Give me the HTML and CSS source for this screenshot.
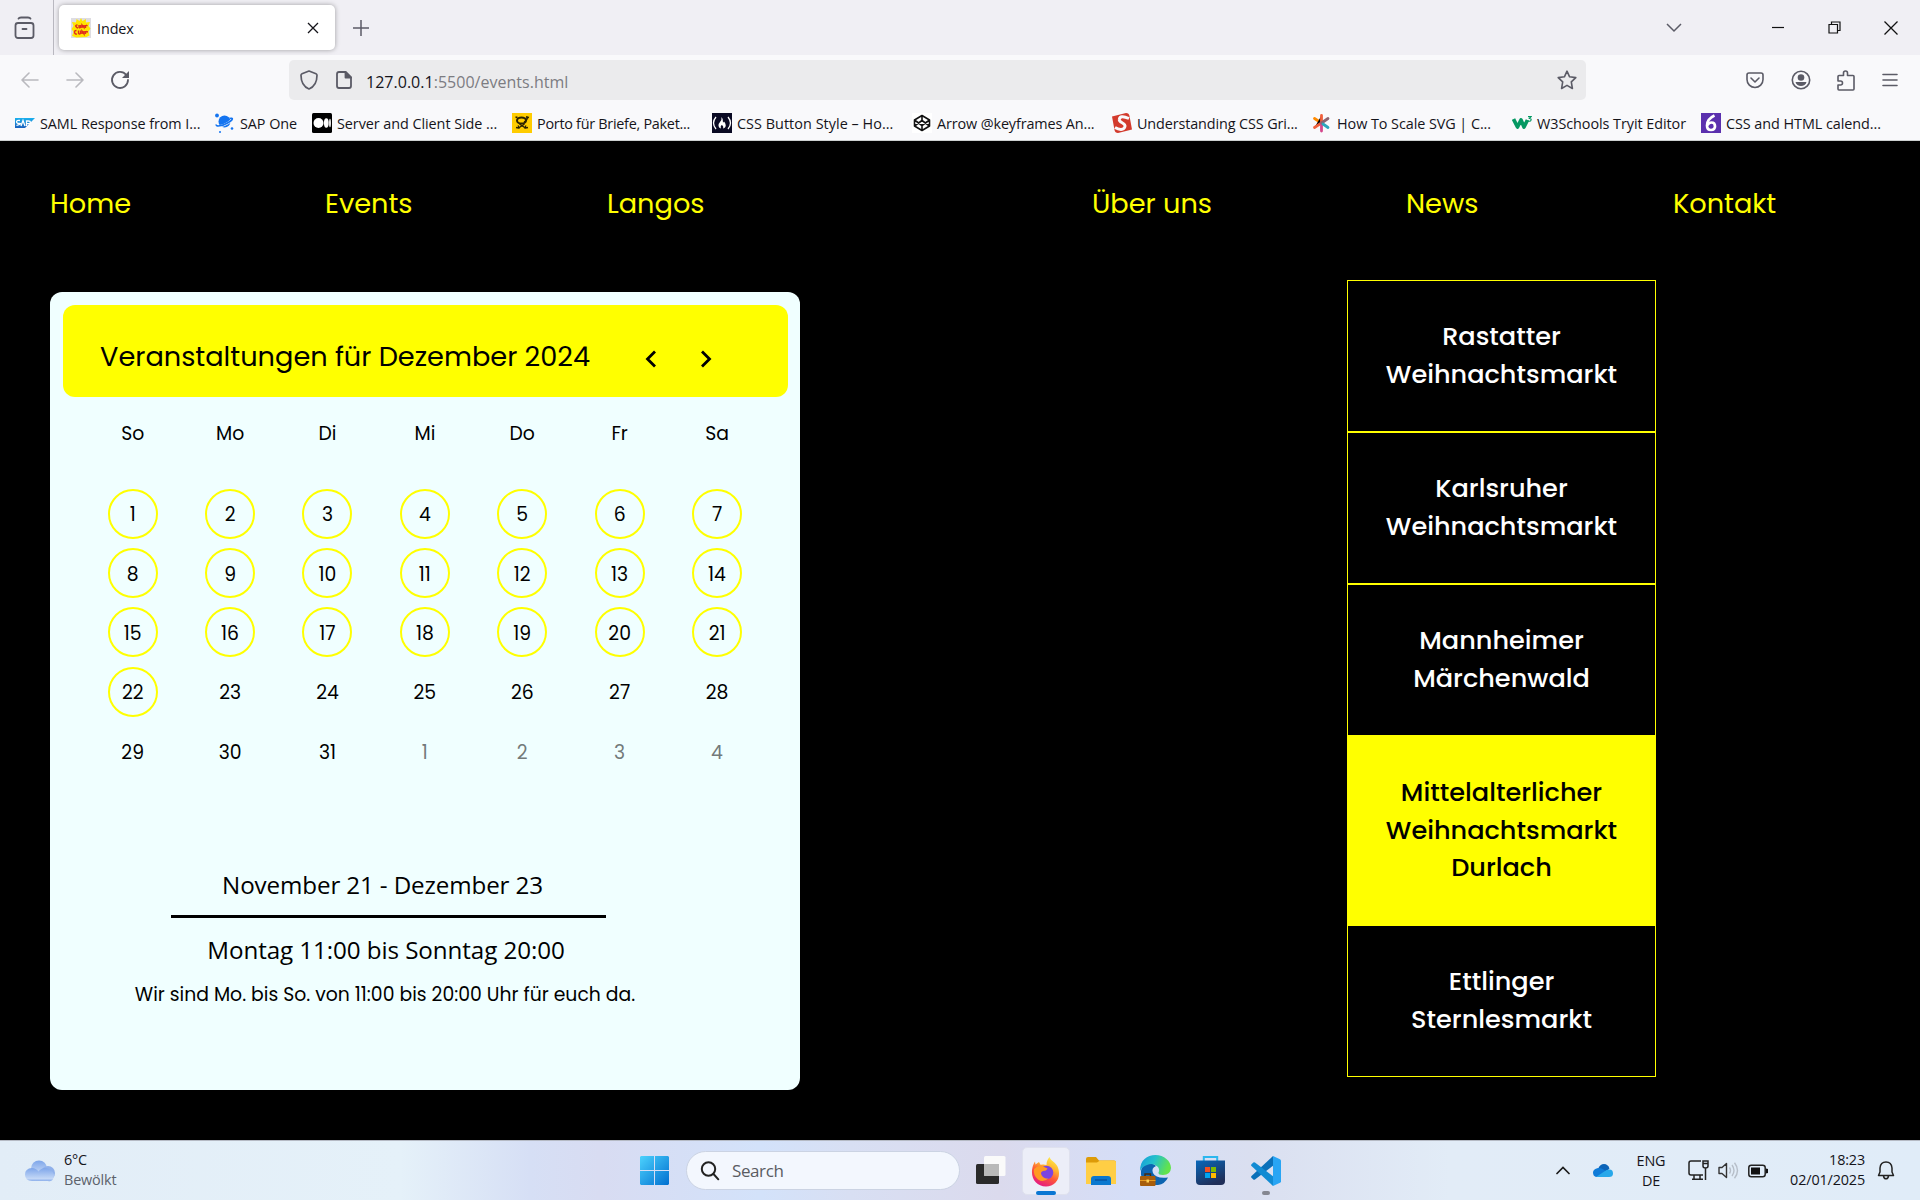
FILE: index.html
```
<!DOCTYPE html>
<html lang="de">
<head>
<meta charset="utf-8">
<title>Index</title>
<link rel="stylesheet" href="styles.css">
</head>
<body>
<header class="browser">
  <div class="tabstrip">
    <div class="recent"><svg width="22" height="26" viewBox="0 0 22 26" fill="none" stroke="#5b5b66" stroke-width="1.8" stroke-linecap="round"><rect x="1.500" y="8" width="18" height="15" rx="2.500"/><path d="M4.500 3.600Q5 2.500 7 2.500h7q2 0 2.500 1.100M8.500 14h4"/></svg></div>
    <div class="tab">
      <svg class="fav" width="20" height="20" viewBox="0 0 20 20"><path fill="#dedde2" d="M0 0h20v20H0z"/><path fill="#ffe600" d="m10 0 1.500 3L15 1l-.2 3.500L19 4l-1.500 4 2 2.500-2 3 1 4-3 1.500-10 .5L1 18l1.500-4L.5 11l2-3L1 4l4 .5L5.500 1 8.500 3z"/><path stroke="#e02d1b" stroke-width="1.400" fill="none" d="M6.500 7Q4 7 5 8.500T7 10M8 7v2.500q1 .8 1.500 0V7M11 10V7l2 2.500V7M14.500 7v3M15 7l1.500 1M5.500 12.500q-2.500 0-2 2t2.500 1.500M7.500 12.500v3q1 1 2 0v-3M11 16v-3l2 3v-3M14.500 13v3M15 13.500l2 .5"/></svg>
      <span class="tab-title">Index</span>
      <svg width="12" height="12" viewBox="0 0 12 12" stroke="#15141a" stroke-width="1.300"><path d="m1 1 10 10M11 1 1 11"/></svg>
    </div>
    <svg class="plus" width="16" height="16" viewBox="0 0 16 16" stroke="#5b5b66" stroke-width="1.500"><path d="M8 0v16M0 8h16"/></svg>
    <div class="window">
      <svg width="16" height="10" viewBox="0 0 16 10" fill="none" stroke="#5b5b66" stroke-width="1.500"><path d="m1 1 7 7 7-7"/></svg>
      <svg class="min" width="12" height="12" viewBox="0 0 12 12" stroke="#111" stroke-width="1.200"><path d="M0 5.500h12"/></svg>
      <svg class="restore" width="13" height="13" viewBox="0 0 13 13" fill="none" stroke="#111" stroke-width="1.200"><path d="M1 3.500h8.500V12H1zM3.500 3.500V1H12v8.500H9.500"/></svg>
      <svg class="shut" width="14" height="14" viewBox="0 0 14 14" stroke="#111" stroke-width="1.300"><path d="m.5.5 13 13M13.500.5l-13 13"/></svg>
    </div>
  </div>
  <div class="toolbar">
    <svg class="back" width="18" height="16" viewBox="0 0 18 16" fill="none" stroke="#b9b9be" stroke-width="1.600" stroke-linecap="round" stroke-linejoin="round"><path d="M17 8H1m7-7L1 8l7 7"/></svg>
    <svg class="fwd" width="18" height="16" viewBox="0 0 18 16" fill="none" stroke="#b9b9be" stroke-width="1.600" stroke-linecap="round" stroke-linejoin="round"><path d="M1 8h16m-7-7 7 7-7 7"/></svg>
    <svg class="reload" width="20" height="20" viewBox="0 0 20 20" fill="none" stroke="#5b5b66" stroke-width="1.800" stroke-linecap="round"><path d="M16.300 5A8 8 0 1 0 18 10"/><path fill="#5b5b66" stroke="none" d="M19 1v7h-7z"/></svg>
    <div class="urlbar">
      <svg width="18" height="20" viewBox="0 0 18 20" fill="none" stroke="#5b5b66" stroke-width="1.700" stroke-linejoin="round"><path d="m9 1 7 2.800q1 .4 1 1.500C17 12 14 17 9 19 4 17 1 12 1 5.300q0-1.100 1-1.500z"/></svg>
      <svg class="doc" width="16" height="18" viewBox="0 0 16 18" fill="none" stroke="#5b5b66" stroke-width="1.800" stroke-linejoin="round"><path d="M3 1h6.500L15 6.500V15q0 2-2 2H3q-2 0-2-2V3q0-2 2-2z"/><path fill="#5b5b66" d="M9.500 1v5.500H15z"/></svg>
      <span class="url">127.0.0.1<span class="path">:5500/events.html</span></span>
      <svg class="star" width="20" height="20" viewBox="0 0 20 20" fill="none" stroke="#5b5b66" stroke-width="1.600" stroke-linejoin="round"><path d="m10 1.200 2.600 5.600 6.200.8-4.500 4.300 1.100 6.600-5.400-3.100-5.400 3.100 1.100-6.600L1.200 7.600l6.200-.8z"/></svg>
    </div>
    <svg class="pocket" width="18" height="18" viewBox="0 0 18 18" fill="none" stroke="#5b5b66" stroke-width="1.600" stroke-linecap="round" stroke-linejoin="round"><path d="M3 2h12q2 0 2 2v4.500a8 8 0 0 1-16 0V4q0-2 2-2z"/><path d="m5 7 4 4 4-4"/></svg>
    <svg class="account" width="20" height="20" viewBox="0 0 20 20"><circle cx="10" cy="10" r="8.700" fill="none" stroke="#5b5b66" stroke-width="1.600"/><circle cx="10" cy="7.500" r="3.300" fill="#5b5b66"/><path fill="#5b5b66" d="M4.500 12h11c-.5 2.500-3 4-5.500 4s-5-1.500-5.500-4z"/></svg>
    <svg class="puzzle" width="18" height="21" viewBox="0 0 18 21" fill="none" stroke="#5b5b66" stroke-width="1.600" stroke-linejoin="round"><path d="M1 8V6.500Q1 5.500 2 5.500h4.500V3q0-2 2-2t2 2v2.500H16q1 0 1 1V19q0 1-1 1H2q-1 0-1-1v-4h2.500q2 0 2-2t-2-2H1z"/></svg>
    <svg width="16" height="14" viewBox="0 0 16 14" stroke="#5b5b66" stroke-width="1.600" stroke-linecap="round"><path d="M1 1.500h14M1 7h14M1 12.500h14"/></svg>
  </div>
  <div class="bookmarks">
    <a class="bm"><svg width="20" height="20" viewBox="0 0 20 20"><defs><linearGradient id="sap" x2="0" y2="1"><stop stop-color="#1bb1ee"/><stop offset="1" stop-color="#1b5fbd"/></linearGradient></defs><path fill="url(#sap)" d="M0 5h20L10 15H0z"/><path d="M5 7.500Q1.500 7 1.500 8.800T4.500 10.500 1.500 12.500M6 13l2-5.500L10 13M11.500 13V8h2q2 0 2 1.300t-2 1.400h-2" fill="none" stroke="#fff" stroke-width="1.300"/></svg><span>SAML Response from I...</span></a>
    <a class="bm short"><svg width="20" height="20" viewBox="0 0 20 20" fill="#1474f0"><circle cx="2" cy="2.500" r="1.900"/><circle cx="17" cy="15.500" r="1.300"/><circle cx="5" cy="19" r="1"/><circle cx="9.500" cy="8.500" r="6"/><path d="M15 5c4-1 3 2-2 5S1 15 1 12" fill="none" stroke="#f9f9fb" stroke-width="2.600"/><path d="M14.500 5.500c4-1 4 1-1.500 4.300S0 14 1.500 11.500" fill="none" stroke="#1474f0" stroke-width="1.600"/></svg><span>SAP One</span></a>
    <a class="bm"><svg width="20" height="20" viewBox="0 0 20 20"><rect width="20" height="20" rx="1.500"/><circle cx="6.500" cy="10" r="5" fill="#fff"/><ellipse cx="14.300" cy="10" rx="2.400" ry="4.800" fill="#fff"/><ellipse cx="18" cy="10" rx=".9" ry="4.300" fill="#fff"/></svg><span>Server and Client Side ...</span></a>
    <a class="bm"><svg width="20" height="20" viewBox="0 0 20 20"><path fill="#fc0" d="M0 0h20v20H0z"/><g fill="none" stroke="#2b2200"><ellipse cx="9.500" cy="7.500" rx="4.500" ry="3" stroke-width="2"/><path stroke-width="1.700" d="M5.500 4.500 3.500 4M12 9q3-1 3.500-5.500M14 3.800l3 .7"/><path stroke-width="1.300" d="m4 14.500 2.500.5 6-4M16 14.500l-2.500.5-6-4M6 12.500l1.500 3M14 12.500l-1.500 3"/></g></svg><span>Porto für Briefe, Paket...</span></a>
    <a class="bm"><svg width="20" height="20" viewBox="0 0 20 20"><path fill="#0a0a23" d="M0 0h20v20H0z"/><path d="M4 4q-5 6 0 12M16 4q5 6 0 12" fill="none" stroke="#fff" stroke-width="1.300"/><path fill="#fff" d="M9.500 4q.5 3-1.500 5t-1.500 4T9 15.500q-1-2 .5-3.500 2.500 1 1.500 3.500 3-1 2.700-3.500T12 8.500q-.5 1-1 1Q11.500 6 9.500 4z"/></svg><span>CSS Button Style – Ho...</span></a>
    <a class="bm"><svg width="20" height="20" viewBox="0 0 20 20"><path fill="#fff" d="M0 0h20v20H0z"/><path d="m10 2.500 7.500 4.500v6L10 17.500 2.500 13V7zM10 2.500v5M10 12.500v5M2.500 7l7.500 5.500L17.500 7M2.500 13 10 7.500l7.500 5.500" fill="none" stroke="#111" stroke-width="1.600" stroke-linejoin="round"/></svg><span>Arrow @keyframes An...</span></a>
    <a class="bm"><svg width="20" height="20" viewBox="0 0 20 20"><path fill="#d33a2c" d="M0 3.500 14 0q3 0 3.500 3l2.500 13.500L6 20q-3 0-3.500-3z"/><path d="M17 5.500Q8 1.500 7.300 6.300C6.500 10 14 9.500 13 13.500 12 17.500 7 17 3 14.500" fill="none" stroke="#f9f9fb" stroke-width="2.900"/></svg><span>Understanding CSS Gri...</span></a>
    <a class="bm"><svg width="20" height="20" viewBox="0 0 20 20" stroke-width="2.800" stroke-linecap="round"><path stroke="#ff8a00" d="m2.500 5.500 7 4.500"/><path stroke="#f0603c" d="m2.500 14.500 7-4.500V2.500"/><path stroke="#d5478c" d="M9.500 10v8"/><path stroke="#8c6470" d="m9.500 10 6.500-4.500"/><path stroke="#2ba6bd" d="m11 11 5 3.500"/></svg><span>How To Scale SVG | C...</span></a>
    <a class="bm mid"><svg width="20" height="20" viewBox="0 0 20 20" fill="none" stroke="#059862"><path stroke-width="3.700" stroke-linejoin="round" d="m1.500 6 4 8 3.500-7 3 7 3.500-7"/><path stroke-width="1.200" d="M16 3.700h3l-1.500 1.700q2 .1 1.500 1.800t-3 .7"/></svg><span>W3Schools Tryit Editor</span></a>
    <a class="bm"><svg width="20" height="20" viewBox="0 0 20 20"><path fill="#5b30ae" d="M0 0h20v20H0z"/><path d="M13.500 2.500Q6 6 6 12.500 6 17 10 17t4-3.700Q14 9.500 10.500 9.500 8 9.500 6.500 12" fill="none" stroke="#fff" stroke-width="2.700"/></svg><span>CSS and HTML calend...</span></a>
  </div>
</header>

<main class="page">
  <nav class="menu"><a>Home</a><a>Events</a><a>Langos</a><a>Über uns</a><a>News</a><a>Kontakt</a></nav>
  <div class="content">
    <section class="calendar">
      <div class="cal-head">
        <h1>Veranstaltungen für Dezember 2024</h1>
        <svg width="12" height="18" viewBox="0 0 12 18" fill="none" stroke="#000" stroke-width="2.800"><path d="m10 1.500-7.500 7.500 7.500 7.500"/></svg>
        <svg class="next" width="12" height="18" viewBox="0 0 12 18" fill="none" stroke="#000" stroke-width="2.800"><path d="m2 1.500 7.500 7.500-7.500 7.500"/></svg>
      </div>
      <div class="weekdays"><span>So</span><span>Mo</span><span>Di</span><span>Mi</span><span>Do</span><span>Fr</span><span>Sa</span></div>
      <div class="days">
        <span class="on">1</span><span class="on">2</span><span class="on">3</span><span class="on">4</span><span class="on">5</span><span class="on">6</span><span class="on">7</span>
        <span class="on">8</span><span class="on">9</span><span class="on">10</span><span class="on">11</span><span class="on">12</span><span class="on">13</span><span class="on">14</span>
        <span class="on">15</span><span class="on">16</span><span class="on">17</span><span class="on">18</span><span class="on">19</span><span class="on">20</span><span class="on">21</span>
        <span class="on">22</span><span>23</span><span>24</span><span>25</span><span>26</span><span>27</span><span>28</span>
        <span>29</span><span>30</span><span>31</span><span class="off">1</span><span class="off">2</span><span class="off">3</span><span class="off">4</span>
      </div>
      <div class="info">
        <p class="dates">November 21 - Dezember 23</p>
        <hr>
        <p class="hours">Montag 11:00 bis Sonntag 20:00</p>
        <p class="note">Wir sind Mo. bis So. von 11:00 bis 20:00 Uhr für euch da.</p>
      </div>
    </section>
    <section class="events">
      <button>Rastatter<br>Weihnachtsmarkt</button>
      <button>Karlsruher<br>Weihnachtsmarkt</button>
      <button>Mannheimer<br>Märchenwald</button>
      <button class="active">Mittelalterlicher<br>Weihnachtsmarkt<br>Durlach</button>
      <button>Ettlinger<br>Sternlesmarkt</button>
    </section>
  </div>
</main>

<footer class="taskbar">
  <div class="weather">
    <svg width="30" height="22" viewBox="0 0 30 22"><defs><linearGradient id="cl" x2="0" y2="1"><stop stop-color="#7ea6ea"/><stop offset=".8" stop-color="#c3d7f6"/><stop offset="1" stop-color="#86abea"/></linearGradient></defs><circle cx="14" cy="8.500" r="8" fill="url(#cl)"/><circle cx="23" cy="13" r="7" fill="#8fb0ea"/><path fill="url(#cl)" d="M7 8q4 0 6.500 3.500Q16 8 20 8t7 3 1.500 7-5.500 3H7q-7-.5-7-6.500T7 8z"/></svg>
    <div class="lines"><span>6°C</span><span class="dim">Bewölkt</span></div>
  </div>
  <div class="apps">
    <svg width="29" height="29" viewBox="0 0 29 29"><defs><linearGradient id="win" x2="1" y2="1"><stop stop-color="#4cd2fd"/><stop offset="1" stop-color="#006fd0"/></linearGradient></defs><path fill="url(#win)" d="M1 0h13v14H0V1zM15 0h13l1 1v13H15zM0 15h14v14H1l-1-1zM15 15h14v13l-1 1H15z"/></svg>
    <div class="search"><svg width="20" height="20" viewBox="0 0 20 20" fill="none" stroke="#222" stroke-width="2" stroke-linecap="round"><circle cx="8.500" cy="8" r="6.700"/><path d="m13.500 13 4.800 5.300"/></svg><span>Search</span></div>
    <svg class="view" width="30" height="29" viewBox="0 0 30 29"><rect x="0" y="8" width="23" height="20" rx="1.500" fill="#2a2a2a"/><rect x="8" y="0" width="21.500" height="20" rx="1.500" fill="#fafafa"/><path fill="#b9b9b9" d="M8 8h15v12H9.500Q8 20 8 18.500z"/></svg>
    <div class="tile"><svg width="30" height="30" viewBox="0 0 30 30"><defs><linearGradient id="ff" x1=".8" y1="0" x2=".3" y2="1"><stop stop-color="#fff44f"/><stop offset=".35" stop-color="#ffb02e"/><stop offset=".6" stop-color="#ff5a36"/><stop offset="1" stop-color="#e31587"/></linearGradient></defs><path fill="url(#ff)" d="M18.500 0c1 4 6 5 8 9.500C31 20 25 29.500 15 29.500S-1 20.500 1.500 10.500C2 8 3 6 4 4.500l.5 3L8 5l1.500 2.700Q13 7 15.500 8C15.500 4 17 2 18.500 0z"/><circle cx="15.500" cy="15.500" r="6.800" fill="#7b44e0"/><path fill="#ff9a22" d="M3 12q4-4 9-2.500l4.500 2q-1 2.500-4.500 2.500-3 1-1.500 4 2.500 4.500 7 3.200-5 5-10.500 1.300Q2 18.500 3 12z"/></svg></div>
    <svg class="folder" width="30" height="28" viewBox="0 0 30 28"><path fill="#dd9b08" d="M0 2q0-2 2-2h8l3 3.500H28q2 0 2 2V12H0z"/><path fill="#ffce45" d="M0 5.500h11l3-2h14q2 0 2 2V27H0z"/><path fill="#0a78cf" d="M5 28v-6q0-3 3-3h14q3 0 3 3v6z"/><path stroke="#064f9d" stroke-width="1.300" d="M9 23h12"/></svg>
    <svg class="edge" width="31" height="31" viewBox="0 0 31 31"><defs><linearGradient id="ed" x2="1" y2=".3"><stop stop-color="#159bdc"/><stop offset=".5" stop-color="#25c1cb"/><stop offset="1" stop-color="#62e34c"/></linearGradient></defs><path fill="#0c64b0" d="M1 16C2 9 11 6 16 11q-5 2-3 7 3 6 15 4.500Q25 29 18 30 4 31 1 20z"/><path fill="url(#ed)" d="M0 16C0 5 7 0 15.500 0S31 6 31 13q-.5 7-8 7-5 0-4.500-2.500Q20 15 18 12 13 7 7 10q-5 1.500-7 6z"/><rect y="21" width="15.500" height="10" rx="1" fill="#a75d0b"/><path d="M0 25.500h15.500" stroke="#e79a20"/><path d="M5 21v-2h5.500v2" fill="none" stroke="#49280b" stroke-width="1.400"/><path fill="#ffd052" d="M6.500 24.500h2.500v3H6.500z"/></svg>
    <svg class="store" width="29" height="29" viewBox="0 0 29 29"><defs><linearGradient id="st" x2=".5" y2="1"><stop stop-color="#0868bb"/><stop offset="1" stop-color="#202f59"/></linearGradient></defs><path d="M7.800 6V1h13.400v5" fill="none" stroke="#2cb7ee" stroke-width="2"/><path fill="url(#st)" d="M0 4.500h29V25q0 4-4 4H4q-4 0-4-4z"/><path fill="#f25022" d="M9 11h5v5H9z"/><path fill="#7fba00" d="M15 11h5v5h-5z"/><path fill="#00a4ef" d="M9 17h5v5H9z"/><path fill="#ffb900" d="M15 17h5v5h-5z"/></svg>
    <div class="code"><svg width="30" height="30" viewBox="0 0 30 30"><path fill="#0a70b9" d="m22 0 1 9L4 23.500Q3 24 2.300 23.500L.5 21.800q-.8-1 0-1.800z"/><path fill="#118bd3" d="m22 30 1-9L4 6.500Q3 6 2.300 6.500L.5 8.200q-.8 1 0 1.800z"/><path fill="#28a5f4" d="m22 0 7 3.200q1 .5 1 1.500v20.600q0 1-1 1.500L22 30z"/></svg></div>
  </div>
  <div class="tray">
    <svg width="14" height="9" viewBox="0 0 14 9" fill="none" stroke="#1b1b1b" stroke-width="1.700" stroke-linecap="round"><path d="m1 7.500 6-6 6 6"/></svg>
    <svg class="cloud" width="20" height="14" viewBox="0 0 20 14"><path fill="#0b63b8" d="M5 5q2-5 6-5t5.500 4.500L12 9z"/><path fill="#0f7bd8" d="M5 4q3-.5 5.500 1.500l7 5L3 13q-3-1-3-4.500T5 4z"/><path fill="#28a8ea" d="m3 13 10.500-7q6.500-2 6.500 3.500 0 3.500-4 3.500z"/></svg>
    <div class="lang"><span>ENG</span><span>DE</span></div>
    <svg class="net" width="21" height="21" viewBox="0 0 21 21" fill="none" stroke="#222" stroke-width="1.500"><path d="M13 1H3Q1 1 1 3v10q0 2 2 2h12M6 15v4M12 15v4M4 19.300h11M17.500 8v12M15 1h5v5q0 2-2.500 2T15 6zM15 3.500h5"/></svg>
    <svg class="vol" width="21" height="17" viewBox="0 0 21 17" fill="none" stroke="#333" stroke-width="1.400" stroke-linejoin="round"><path d="M1 5.500h3l4.500-4v14l-4.500-4H1z"/><path stroke="#b6bec8" d="M11.500 5.500q2 3 0 6M14 3q4 5.500 0 11M16.500.8q6 7.700 0 15.400"/></svg>
    <svg class="bat" width="20" height="14" viewBox="0 0 20 14"><rect x=".8" y="1.200" width="16.400" height="11.600" rx="2.500" fill="none" stroke="#222" stroke-width="1.500"/><path d="M3 3.500h9v7H3zM18 4.500l2 .5v4l-2 .5z" fill="#111"/></svg>
    <div class="clock"><span>18:23</span><span>02/01/2025</span></div>
    <svg class="bell" width="18" height="19" viewBox="0 0 18 19" fill="none" stroke="#222" stroke-width="1.500" stroke-linejoin="round"><path d="M1.500 14.500 3 11V7q.5-6 6-6t6 6v4l1.500 3.500zM6.500 15q.5 2.800 2.500 2.800t2.500-2.800"/></svg>
  </div>
</footer>
</body>
</html>
```
FILE: styles.css
```
* { box-sizing: border-box; }
body {
  margin: 0;
  width: 1920px;
  height: 1200px;
  overflow: hidden;
  display: flex;
  flex-direction: column;
  background: #000;
  font-family: "Segoe UI", "Open Sans", sans-serif;
  color: #15141a;
}
svg { display: block; flex: none; }
span, a, p, h1, button { white-space: nowrap; }

/* Browser window */
.browser { height: 141px; background: #f9f9fb; border-bottom: 1px solid #ccd0d0; }
.tabstrip { height: 55px; display: flex; align-items: center; background: #f0eff4; }
.recent { width: 54px; height: 55px; padding: 15px 0 0 14px; border-right: 1px solid #b9b8c0; }
.tab {
  width: 276px; height: 45px; margin-left: 5px; padding: 0 16px 0 12px;
  display: flex; align-items: center;
  background: #fff; border-radius: 5px; box-shadow: 0 0 5px rgba(0,0,0,.35);
}
.tab-title { margin: 1px 0 0 6px; flex: 1; font-size: 14.4px; letter-spacing: -.1px; }
.plus { margin-left: 18px; }
.window { margin-left: auto; margin-right: 22px; display: flex; align-items: center; }
.min { margin-left: 90px; }
.restore { margin-left: 44px; }
.shut { margin-left: 43px; }

.toolbar { height: 50px; padding: 0 22px 0 21px; display: flex; align-items: center; }
.fwd { margin-left: 27px; }
.reload { margin-left: 26px; }
.urlbar {
  width: 1297px; height: 40px; margin-left: 159px; padding: 0 9px 0 11px;
  display: flex; align-items: center; background: #ebebed; border-radius: 5px;
}
.doc { margin-left: 18px; }
.url { margin: 3px 0 0 14px; font-size: 16px; letter-spacing: .02px; }
.path { color: #7c7c82; }
.star { margin-left: auto; }
.pocket { margin-left: 160px; }
.account { margin-left: 27px; }
.puzzle { margin-left: 26px; margin-right: 27px; }

.bookmarks { height: 35px; padding-left: 15px; display: flex; align-items: center; }
.bm { width: 200px; height: 20px; margin-top: 1px; flex: none; display: flex; align-items: center; gap: 5px; font-size: 14.4px; letter-spacing: -.06px; }
.bm.short { width: 97px; }
.bm.mid { width: 189px; }
.bm:nth-child(4) { letter-spacing: -.27px; }
.bm:nth-child(5) { letter-spacing: .04px; }
.bm:nth-child(6), .bm:nth-child(7) { letter-spacing: -.12px; }

/* Website */
.page { height: 999px; background: #000; color: #000; font-family: Poppins, Inter, sans-serif; }
.menu {
  height: 124px; padding: 1px 0 0 50px; display: grid; align-items: center;
  grid-template-columns: 275px 282px 485px 314px 267px auto;
  color: #ff0; font-size: 27.2px;
}
.content { display: flex; align-items: flex-start; padding: 15px 0 0 50px; }
.calendar { width: 750px; height: 798px; margin-top: 12px; padding: 13px 12px 0 13px; background: azure; border-radius: 12px; }
.cal-head { height: 92px; padding: 12px 0 0 37px; display: flex; align-items: center; background: #ff0; border-radius: 12px; }
.cal-head h1 { width: 545px; margin: 0; font-size: 27.2px; font-weight: 400; }
.cal-head svg { margin-top: 4px; }
.next { margin-left: 43px; }
.weekdays, .days { display: grid; grid-template-columns: repeat(7, 97.4px); justify-items: center; align-items: center; margin-left: 21px; font-size: 18.8px; }
.weekdays { height: 72px; }
.days { margin-top: 15px; grid-auto-rows: 59.4px; }
.days span { width: 50px; height: 50px; padding-top: 2px; display: flex; align-items: center; justify-content: center; }
.days .on { border: 2px solid #ff0; border-radius: 50%; }
.days .off { color: #737a7a; }
.info { width: 540px; margin: 87px 0 0 50px; text-align: center; font-size: 24.2px; }
.info p { margin: 0; line-height: 34px; }
.dates, .hours { font-family: "Segoe UI", "Open Sans", sans-serif; }
.info .dates { padding-right: 1px; letter-spacing: -.13px; }
.info .hours { padding-left: 6px; letter-spacing: -.08px; }
.info hr { width: 435px; height: 3px; margin: 13px 0 15px 58px; border: 0; background: #000; }
.info .note { margin-top: 11px; padding-left: 4px; font-size: 18.8px; }

.events { width: 309px; margin-left: 547px; display: flex; flex-direction: column; }
.events button {
  height: 152px; padding: 0; border: 1px solid #ff0; background: #000; color: #fff;
  font: 500 25.6px/37.7px Poppins, Inter, sans-serif;
}
.events .active { height: 189px; background: #ff0; color: #000; }

/* Taskbar */
.taskbar {
  height: 60px; position: relative; display: flex; align-items: center; border-top: 1px solid #b5bac4;
  background: linear-gradient(90deg, #e2edf7 0, #e5f1f9 400px, #d6dff5 530px, #d8dcf2 600px, #d3e2fa 760px, #d8dff3 850px, #dbdaed 1000px, #d5def7 1130px, #dadff0 1250px, #e2ecf7 1450px, #e0ecf8 1920px);
}
.weather { width: 640px; padding-left: 25px; display: flex; align-items: center; gap: 9px; }
.lines, .lang, .clock { display: flex; flex-direction: column; font-size: 14.4px; line-height: 20px; letter-spacing: -.15px; }
.lines { margin-top: -1px; }
.dim { color: #5c626b; }
.apps { display: flex; align-items: center; }
.search {
  width: 274px; height: 39px; margin-left: 17px; padding-left: 13px; display: flex; align-items: center; gap: 12px;
  border-radius: 20px; background: #f3f7fe; border: 1px solid #cbd3e3; color: #5a5c62; font-size: 17px; letter-spacing: -.4px;
}
.view { margin-left: 16px; }
.tile { width: 48px; height: 48px; margin-left: 16px; padding: 9px 9px 0; background: #eceef8; border: 1px solid #dfe1ee; border-radius: 5px; position: relative; }
.tile svg { margin-left: -1px; }
.tile::after, .code::after { content: ""; position: absolute; left: 13px; bottom: -1px; width: 20px; height: 4px; border-radius: 2px; background: #0a76d3; }
.folder { margin-left: 16px; }
.edge { margin-left: 24px; }
.store { margin-left: 25px; }
.code { margin-left: 26px; position: relative; }
.code::after { left: 11px; bottom: -9px; width: 8px; background: #858791; }
.tray { margin-left: 275px; display: flex; align-items: center; }
.cloud { margin-left: 23px; }
.lang { margin-left: 23px; width: 30px; align-items: center; }
.net { margin-left: 22px; }
.vol { margin-left: 9px; }
.bat { margin-left: 9px; }
.clock { width: 97px; align-items: flex-end; margin-top: -1px; }
.bell { margin-left: 12px; }
```
